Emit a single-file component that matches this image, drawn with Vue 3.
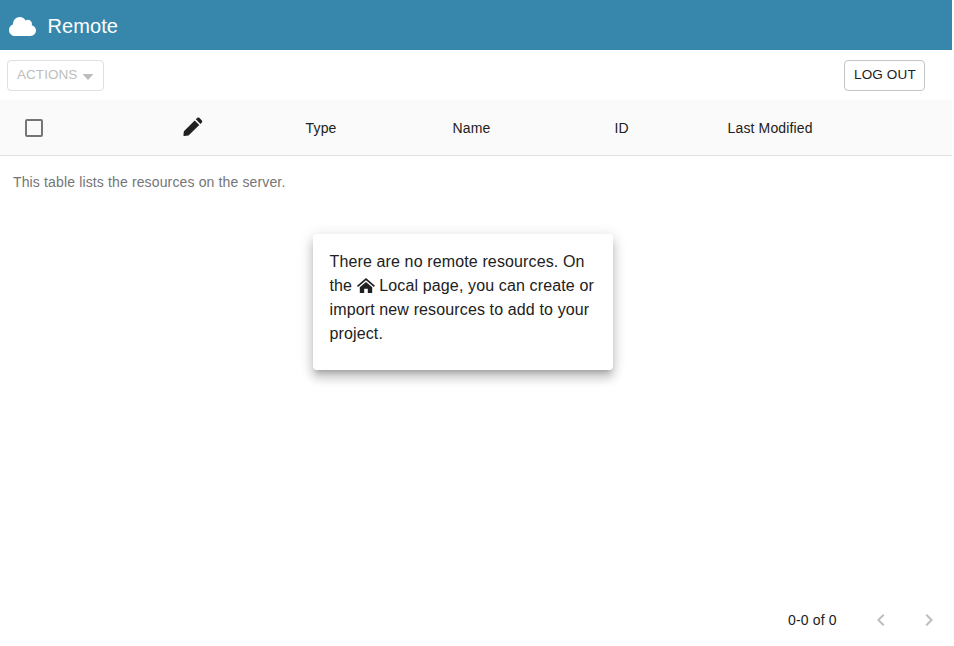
<script setup>
const columns = ['Type', 'Name', 'ID', 'Last Modified']
</script>

<template>
  <main class="page">
    <header class="bar">
      <svg class="cloud" viewBox="0 32 640 448" preserveAspectRatio="none">
        <path d="M537.600 226.600c4.100-10.700 6.400-22.400 6.400-34.600 0-53-43-96-96-96-19.700 0-38.100 6-53.300 16.200C367 64.200 315.300 32 256 32c-88.400 0-160 71.600-160 160 0 2.700.1 5.400.2 8.100C40.200 219.800 0 273.200 0 336c0 79.500 64.500 144 144 144h368c70.700 0 128-57.300 128-128 0-61.900-44-113.600-102.400-125.400z" />
      </svg>
      <h1>Remote</h1>
    </header>
    <div class="toolbar">
      <button class="btn actions" disabled>
        <span>ACTIONS</span>
        <svg class="caret" viewBox="0 0 10 6"><path d="M0.600 0h8.800q.9.200.3 1L5.500 5.600q-.5.500-1 0L.3 1Q-.3.200.600 0z" /></svg>
      </button>
      <button class="btn logout"><span>LOG OUT</span></button>
    </div>
    <div class="head">
      <span class="check"></span>
      <svg class="pencil" viewBox="0 0 20 20">
        <path d="M.9 14.200 11.700 3.400l4.600 4.600L5.500 18.600 1.200 19q-.9 0-.8-.8zM12.800 2.300l1.500-1.500q1-.8 2 0l2.600 2.600q.8 1 0 2l-1.500 1.500z" />
      </svg>
      <span v-for="(c, i) in columns" :key="c" :class="['col', 'c' + i]">{{ c }}</span>
    </div>
    <p class="caption">This table lists the resources on the server.</p>
    <section class="card">
      There are no remote resources. On the
      <svg class="home" viewBox="0 0 18 15">
        <path d="M0 7.800 9 0l9 7.800-1.100 1.300L9 2.300 1.100 9.100z" />
        <path d="M2.800 9.200 9 3.900l6.200 5.300V15h-4.400v-4.300H7.200V15H2.800z" />
      </svg>
      Local page, you can create or import new resources to add to your project.
    </section>
    <footer class="pager">
      <span>0-0 of 0</span>
      <svg class="prev" viewBox="0 0 24 24"><path d="M15.410 7.410 14 6l-6 6 6 6 1.410-1.410L10.830 12z" /></svg>
      <svg class="next" viewBox="0 0 24 24"><path d="M10 6 8.590 7.410 13.170 12l-4.580 4.590L10 18l6-6z" /></svg>
    </footer>
  </main>
</template>

<style>
body { background: #fff; }
</style>

<style scoped>
* { box-sizing: border-box; }
.page {
  width: 954px;
  height: 646px;
  display: flex;
  flex-direction: column;
  overflow: hidden;
  background: #fff;
  color: #212121;
  font-family: Arial, "Liberation Sans", sans-serif;
  font-size: 14px;
}
svg { display: block; fill: currentColor; flex: none; }
.bar {
  width: 952px;
  height: 50px;
  flex: none;
  display: flex;
  align-items: center;
  padding: 2px 0 0 9px;
  background: #3787ac;
  color: #fff;
}
.cloud { width: 27px; height: 19px; margin-top: 1px; }
h1 { margin: 0 0 0 11.400px; font-size: 20px; font-weight: 400; letter-spacing: 0.100px; line-height: 32px; }
.toolbar {
  height: 50px;
  flex: none;
  display: flex;
  justify-content: space-between;
  padding: 10px 29px 0 7px;
}
.btn {
  height: 31px;
  display: flex;
  align-items: center;
  padding: 0 9px 2px;
  border: 1px solid #c4c4c4;
  border-radius: 4px;
  background: #fff;
  color: #212121;
  font: 13.500px/19px Arial, "Liberation Sans", sans-serif;
  text-align: left;
  white-space: nowrap;
}
.actions { width: 97px; border-color: #e0e0e0; color: #bdbdbd; }
.logout { width: 81px; letter-spacing: 0.150px; }
.actions span { letter-spacing: 0.050px; width: 66px; }
.caret { width: 10px; height: 6px; margin: 4px 0 0 0; }
.head {
  width: 952px;
  height: 56px;
  flex: none;
  display: grid;
  grid-template-columns: 158px 122.600px 147px 162px 113px 1fr;
  align-items: center;
  padding-left: 25px;
  border-bottom: 1px solid #e0e0e0;
  background: #fafafa;
}
.check { width: 18px; height: 18px; border: 2px solid #757575; border-radius: 2px; }
.pencil { width: 20px; height: 20px; margin-top: -1px; }
.col { letter-spacing: 0.130px; line-height: 20px; }
.caption { margin: 16px 0 0 13px; color: #757575; line-height: 20px; letter-spacing: 0.140px; }
.card {
  width: 300px;
  height: 136px;
  flex: none;
  margin: 42px 0 0 313px;
  padding: 16px 16px 16px 16.500px;
  border-radius: 4px;
  background: #fff;
  font-size: 16px;
  line-height: 24px;
  letter-spacing: 0.130px;
  box-shadow: 0 5px 5px -3px rgba(0,0,0,.2), 0 8px 10px 1px rgba(0,0,0,.14), 0 3px 14px 2px rgba(0,0,0,.12);
}
.home { display: inline-block; width: 18px; height: 15px; vertical-align: -1.500px; }
.pager {
  height: 52px;
  flex: none;
  display: flex;
  align-items: center;
  margin-top: auto;
  padding-left: 788px;
}
.pager span { width: 81px; letter-spacing: 0.150px; }
.pager svg { width: 24px; color: #bdbdbd; }
.next { margin-left: 24px; }
</style>
